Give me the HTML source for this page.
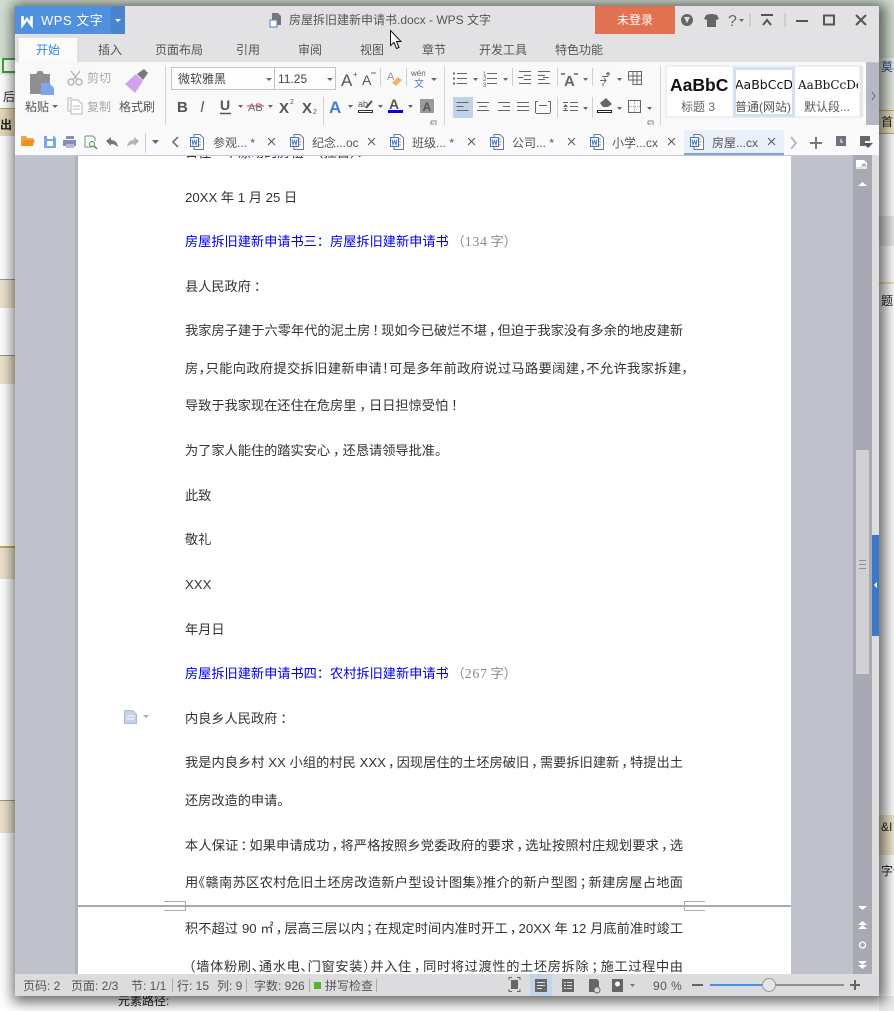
<!DOCTYPE html>
<html lang="zh"><head><meta charset="utf-8"><title>WPS 文字</title>
<style>
html,body{margin:0;padding:0;background:#fff}
body{width:894px;height:1011px;position:relative;overflow:hidden;font-family:"Liberation Sans","Noto Sans CJK SC",sans-serif}
.b{position:absolute;white-space:nowrap}
#win{position:absolute;left:15px;top:6px;width:864px;height:990px;background:#bfc1cb;box-shadow:2px 2px 13px 4px rgba(0,0,0,.6)}
#ov{position:absolute;left:0;top:0;width:894px;height:1011px}
#ov text{font-family:"Liberation Sans","Noto Sans CJK SC",sans-serif;font-size:12px;fill:#555}
#docclip{position:absolute;left:78px;top:155px;width:713px;height:819px;background:#fff;overflow:hidden}
#pshadow{position:absolute;left:75px;top:155px;width:3px;height:819px;background:#aeb0bb}
.l{position:absolute;left:107px;font-size:13.2px;line-height:20px;color:#333;white-space:nowrap;font-family:"Liberation Sans","Noto Sans CJK SC",sans-serif;font-feature-settings:"halt"}
.l u{text-decoration:none;padding:0 3px}
.j{width:498px;white-space:normal;text-align:justify;text-align-last:justify;height:20px;overflow:visible}
.j u{padding:0 2px}
.t u{padding:0}
.blue{color:#0000ee;font-feature-settings:normal}
.g{color:#888;font-size:13px;padding-left:3px;font-feature-settings:normal}
.g i{font-family:"Liberation Serif",serif;font-style:normal;font-size:14px;letter-spacing:.6px;padding:0 3px 0 0}
</style></head><body>

<!-- background behind the window -->
<div class="b" style="left:0;top:0;width:894px;height:58px;background:#d3ddd1"></div>
<div class="b" style="left:0;top:58px;width:15px;height:17px;background:#e8efe6"></div>
<div class="b" style="left:2px;top:58px;width:13px;height:15px;background:#3aa53a"></div>
<div class="b" style="left:4px;top:60px;width:11px;height:11px;background:#fff"></div>
<div class="b" style="left:0;top:108px;width:15px;height:27px;background:#e6d9b8;border-top:1px solid #c6a95f"></div>
<div class="b" style="left:0;top:279px;width:15px;height:28px;background:#ece3cc;border-top:1px solid #999"></div>
<div class="b" style="left:0;top:355px;width:15px;height:28px;background:#ece3cc;border-top:1px solid #999"></div>
<div class="b" style="left:0;top:546px;width:15px;height:31px;background:#ece3cc;border-top:2px solid #c6a95f"></div>
<div class="b" style="left:0;top:800px;width:15px;height:32px;background:#ece3cc;border-top:1px solid #999"></div>
<div class="b" style="left:879px;top:58px;width:15px;height:52px;background:#e4ece2"></div>
<div class="b" style="left:879px;top:110px;width:15px;height:22px;background:#efe7c8;border-top:1px solid #c6a95f;border-bottom:1px solid #c6a95f"></div>
<div class="b" style="left:879px;top:216px;width:15px;height:30px;background:#e8e8ea"></div>
<div class="b" style="left:879px;top:282px;width:15px;height:2px;background:#eedfa8"></div>
<div class="b" style="left:879px;top:815px;width:15px;height:40px;background:#f0e8cc"></div>
<div class="b" style="left:879px;top:996px;width:15px;height:15px;background:#eee"></div>
<div class="b" style="left:118px;top:992px;font-size:12px;color:#222">元素路径:</div>
<div class="b" style="left:881px;top:820px;font-size:12px;color:#222">&amp;I</div>
<div class="b" style="left:881px;top:862px;font-size:12px;color:#222">字体</div>
<div class="b" style="left:881px;top:113px;font-size:12px;color:#222">首</div>
<div class="b" style="left:881px;top:292px;font-size:12px;color:#222">题</div>
<div class="b" style="left:881px;top:58px;font-size:12px;color:#33528a">莫板</div>
<div class="b" style="left:3px;top:88px;font-size:12px;color:#333">后</div>
<div class="b" style="left:0;top:116px;font-size:12px;font-weight:bold;color:#222">出</div>

<div id="win"></div>
<div id="pshadow"></div>

<div id="docclip">
<div class="l" style="top:-12px">日往一个漂动的房租一（捏自）：</div>
<div class="l" style="top:33px">20XX 年 1 月 25 日</div>
<div class="l" style="top:77px"><span class="blue">房屋拆旧建新申请书三：房屋拆旧建新申请书</span><span class="g">（<i>134</i>字）</span></div>
<div class="l" style="top:122px">县人民政府<u>：</u></div>
<div class="l j" style="top:166px">我家房子建于六零年代的泥土房<u>！</u>现如今已破烂不堪<u>，</u>但迫于我家没有多余的地皮建新</div>
<div class="l j t" style="top:204px;width:503px">房，只能向政府提交拆旧建新申请！可是多年前政府说过马路要阔建，不允许我家拆建，</div>
<div class="l" style="top:241px">导致于我家现在还住在危房里<u>，</u>日日担惊受怕<u>！</u></div>
<div class="l" style="top:286px">为了家人能住的踏实安心<u>，</u>还恳请领导批准。</div>
<div class="l" style="top:331px">此致</div>
<div class="l" style="top:375px">敬礼</div>
<div class="l" style="top:420px">XXX</div>
<div class="l" style="top:465px">年月日</div>
<div class="l" style="top:509px"><span class="blue">房屋拆旧建新申请书四：农村拆旧建新申请书</span><span class="g">（<i>267</i>字）</span></div>
<div class="l" style="top:554px">内良乡人民政府<u>：</u></div>
<div class="l j" style="top:598px">我是内良乡村 XX 小组的村民 XXX<u>，</u>因现居住的土坯房破旧<u>，</u>需要拆旧建新<u>，</u>特提出土</div>
<div class="l" style="top:636px">还房改造的申请。</div>
<div class="l j" style="top:681px">本人保证<u>：</u>如果申请成功<u>，</u>将严格按照乡党委政府的要求<u>，</u>选址按照村庄规划要求<u>，</u>选</div>
<div class="l j" style="top:718px">用《赣南苏区农村危旧土坯房改造新户型设计图集》推介的新户型图<u>；</u>新建房屋占地面</div>
<div class="l j" style="top:764px">积不超过 90 ㎡<u>，</u>层高三层以内<u>；</u>在规定时间内准时开工<u>，</u>20XX 年 12 月底前准时竣工</div>
<div class="l j" style="top:802px;left:111px;width:494px">（墙体粉刷、通水电、门窗安装）并入住<u>，</u>同时将过渡性的土坯房拆除<u>；</u>施工过程中由</div>
<div class="b" style="left:0;top:750px;width:713px;height:2px;background:#a8a8b4"></div>
</div>

<svg id="ov" viewBox="0 0 894 1011" xmlns="http://www.w3.org/2000/svg">
<defs>
<symbol id="wd" viewBox="0 0 14 16" overflow="visible">
<path d="M4 .5h6l3.500 3.500v11.500H4z" fill="#fff" stroke="#777"/>
<path d="M6 5h5M8 8h3M8 11h3" stroke="#999"/>
<rect x="0.500" y="3.500" width="8" height="9" fill="#fff" stroke="#3f74c0"/>
<path d="M2 5.500l1 5 1.500-4 1.500 4 1-5" fill="none" stroke="#3f74c0"/>
</symbol>
</defs>

<!-- title bar -->
<rect x="15" y="6" width="864" height="56" fill="#e2e2e5"/>
<rect x="15" y="6" width="96" height="28" fill="#4f90df"/>
<rect x="111" y="6" width="14" height="28" fill="#4a84cc"/>
<path d="M22.500 16v9l4.500-6 4.500 6v-9" fill="none" stroke="#fff" stroke-width="2.600"/>
<text x="41" y="25" style="font-size:13px;fill:#fff;letter-spacing:.5px">WPS 文字</text>
<path d="M115 19h6l-3 3z" fill="#fff"/>
<path d="M272 13h6l3 3v9h-9z" fill="#777"/><rect x="270" y="20" width="7" height="7" fill="#fff" stroke="#4a84cc"/>
<text x="289" y="24" style="font-size:12px;fill:#555">房屋拆旧建新申请书.docx - WPS 文字</text>
<rect x="595" y="6" width="80" height="28" fill="#e07252"/>
<text x="617" y="24" style="fill:#fff">未登录</text>
<circle cx="687" cy="20" r="6" fill="#666"/><path d="M684 17l6 0-3 6z" fill="#e2e2e5"/>
<path d="M706 15l4-1h3l4 1 2 4-3 1v7h-9v-7l-3-1z" fill="#666"/>
<text x="728" y="26" style="font-size:16px;fill:#666">?</text><path d="M739 19h5l-2.500 3z" fill="#666"/>
<path d="M750 13v14M785 13v14" stroke="#bbb"/>
<path d="M761 15h12M763 25l4-5 4 5" fill="none" stroke="#555" stroke-width="2"/>
<path d="M796 21h12" stroke="#555" stroke-width="2"/>
<rect x="824" y="15.500" width="10" height="9" fill="none" stroke="#555" stroke-width="2"/>
<path d="M856 15l10 10M866 15l-10 10" stroke="#555" stroke-width="2"/>

<!-- menu tabs -->
<path d="M18 62V38q0-1 1-1h58q1 0 1 1v24z" fill="#fbfbfc" stroke="#d2d2d6"/>
<text x="36" y="54" style="fill:#3a86d0">开始</text>
<text x="98" y="54">插入</text><text x="155" y="54">页面布局</text><text x="236" y="54">引用</text>
<text x="298" y="54">审阅</text><text x="360" y="54">视图</text><text x="422" y="54">章节</text>
<text x="479" y="54">开发工具</text><text x="555" y="54">特色功能</text>

<!-- ribbon -->
<rect x="15" y="62" width="851" height="63" fill="#f9f9fa"/>
<rect x="19" y="61" width="58" height="2" fill="#f9f9fa"/>
<path d="M30 74h6l2-3h4l2 3h6v20H30z" fill="#8f8f8f"/>
<path d="M41 83h8l5 5v7H41z" fill="#7fa6ea"/>
<text x="25" y="111">粘贴</text><path d="M52 105h6l-3 3z" fill="#666"/>
<path d="M71 71l7 9M80 71l-7 9" stroke="#b9b9b9" stroke-width="1.500"/><circle cx="71" cy="82" r="3" fill="none" stroke="#b9b9b9" stroke-width="1.500"/><circle cx="79" cy="82" r="3" fill="none" stroke="#b9b9b9" stroke-width="1.500"/>
<text x="87" y="82" style="fill:#aaa">剪切</text>
<path d="M72 98h-4v13h4" fill="none" stroke="#b9b9b9"/><path d="M71 100h7l4 4v10H71z" fill="#fff" stroke="#b9b9b9"/><path d="M73 106h7M73 109h7" stroke="#b9b9b9"/>
<text x="87" y="111" style="fill:#aaa">复制</text>
<path d="M125 84l11-10 7 7-8 12z" fill="#cfa3ef"/><path d="M137 74l7-5 4 4-5 7z" fill="#777"/>
<text x="119" y="111">格式刷</text>
<path d="M165.500 66v59" stroke="#d4d4d8"/>

<rect x="171.500" y="67.500" width="164" height="22" fill="#fdfdfd" stroke="#c4c4c8"/><path d="M274.500 68v22" stroke="#c4c4c8"/>
<text x="178" y="83" style="fill:#444">微软雅黑</text><path d="M266 78h6l-3 3z" fill="#666"/>
<text x="278" y="83" style="fill:#444">11.25</text><path d="M327 78h6l-3 3z" fill="#666"/>
<text x="341" y="86" style="font-size:17px;fill:#555">A</text><text x="353" y="77" style="font-size:8px;fill:#555">+</text>
<text x="362" y="85" style="font-size:14px;fill:#555">A</text><path d="M371 73h5" stroke="#666"/>
<path d="M380.500 68v18M406.500 68v18" stroke="#d0d0d4"/>
<text x="387" y="80" style="font-size:11px;fill:#999">A</text><path d="M392 83l6-6 4 3-6 6z" fill="#f0b26a"/>
<text x="411" y="76" style="font-size:8px;fill:#666">wén</text><text x="414" y="87" style="font-size:10px;fill:#4a84cc">文</text><path d="M431 78h6l-3 3z" fill="#666"/>
<path d="M444.500 66v59" stroke="#d4d4d8"/>
<text x="177" y="112" style="font-size:15px;font-weight:bold;fill:#555">B</text>
<text x="200" y="112" style="font-size:16px;font-style:italic;fill:#666">I</text>
<text x="220" y="110" style="font-size:14px;font-weight:bold;fill:#555">U</text><path d="M220 113.500h11" stroke="#555" stroke-width="1.500"/>
<path d="M238 105h5l-2.500 3zM268 105h5l-2.500 3z" fill="#666"/>
<text x="248" y="111" style="font-size:11px;fill:#666">AB</text><path d="M247 106h17" stroke="#d44"/>
<text x="279" y="113" style="font-size:15px;font-weight:bold;fill:#555">X</text><text x="290" y="104" style="font-size:7px;fill:#555">2</text>
<text x="302" y="113" style="font-size:15px;font-weight:bold;fill:#555">X</text><text x="313" y="114" style="font-size:7px;fill:#555">2</text>
<path d="M323.500 97v28" stroke="#d0d0d4"/>
<text x="329" y="113" style="font-size:17px;font-weight:bold;fill:#3d7fd6">A</text><path d="M348 105h5l-2.500 3z" fill="#666"/>
<text x="358" y="107" style="font-size:9px;fill:#555">ab</text><path d="M366 108l6-7" stroke="#555" stroke-width="2"/><rect x="358.500" y="110.500" width="14" height="2" fill="#fff" stroke="#333"/><path d="M378 105h5l-2.500 3z" fill="#666"/>
<text x="389" y="109" style="font-size:14px;font-weight:bold;fill:#555">A</text><rect x="388" y="110" width="15" height="3" fill="#0000e6"/><path d="M408 105h5l-2.500 3z" fill="#666"/>
<rect x="420" y="99" width="14" height="14" fill="#9a9a9a"/><text x="422.500" y="111" style="font-size:12px;fill:#555;font-weight:bold">A</text>
<path d="M431 121h5v5M431 121v3h3" fill="none" stroke="#888"/>

<g stroke="#666" fill="none">
<path d="M457 73.500h10M457 78.500h10M457 83.500h10M487 73.500h10M487 78.500h10M487 83.500h10"/>
<path d="M453 73.500h2M453 78.500h2M453 83.500h2" stroke-width="2"/>
<path d="M519 71.500h12M524 75.500h7M524 79.500h7M519 83.500h12M518 77.500h5M538 71.500h12M538 75.500h7M538 79.500h7M538 83.500h12M543 77.500h6"/>
<path d="M602 76.500h6v-4M606 74.500l2-2 2 2M600 80.500h6M604 78l2 2.500-2 2.500M603 86v-3"/>
<path d="M628.500 71.500h13v13h-9M628.500 71.500v9M633 72v12M637 72v12M629 76h12M629 80h12"/>
<path d="M477 102.500h12M479 106.500h8M477 110.500h12M498 102.500h12M503 106.500h7M498 110.500h12M517 102.500h12M517 106.500h12M517 110.500h12M535.500 101v12M550.500 101v12M536 113.500h14M536 101.500h2M548 101.500h2M539 105.500h8M563 102.500h5M570 102.500h8M570 106.500h8M563 110.500h5M570 110.500h8"/>
</g>
<path d="M563 107l2.500-3 2.500 3zM564 108h3l-1.500 2z" fill="#666" stroke="none"/>
<text x="483" y="76" style="font-size:6px;fill:#666">1</text><text x="483" y="81" style="font-size:6px;fill:#666">2</text><text x="483" y="87" style="font-size:6px;fill:#666">3</text>
<rect x="453" y="97" width="20" height="21" fill="#c0d3e8"/>
<path d="M456.500 102.500h12M456.500 106.500h7M456.500 110.500h12" stroke="#666"/>
<path d="M473 78h5l-2.500 3zM503 78h5l-2.500 3zM583 78h5l-2.500 3zM617 78h5l-2.500 3zM583 107h5l-2.500 3zM617 107h5l-2.500 3zM647 107h5l-2.500 3z" fill="#666"/>
<path d="M512.500 68v18M557.500 68v18M592.500 68v18M557.500 97v21M592.500 97v21" stroke="#d0d0d4"/>
<text x="564" y="86" style="font-size:15px;font-weight:bold;fill:#666">A</text><path d="M561 74h4M574 74h4" stroke="#666" stroke-width="1.500"/>
<path d="M600 103l6-5 6 6-4 3h-5z" fill="#666"/><rect x="597.500" y="110.500" width="14" height="2" fill="#fff" stroke="#222"/>
<rect x="628.500" y="100.500" width="12" height="12" fill="none" stroke="#666"/><path d="M634.500 101v11M629 106.500h11" stroke="#aaa" stroke-dasharray="1 1"/>
<path d="M648 121h5v5M648 121v3h3" fill="none" stroke="#888"/>
<path d="M660.500 66v59" stroke="#d4d4d8"/>

<!-- styles gallery -->
<rect x="666" y="66" width="194" height="51" fill="#fff" stroke="#e2e2e5"/>
<rect x="733" y="67" width="62" height="50" fill="#d6e0f4"/><rect x="736" y="70" width="56" height="44" fill="#fff"/>
<rect x="860" y="66" width="3" height="51" fill="#e6e6e8"/>
<text x="670" y="91" style="font-size:17.500px;font-weight:bold;fill:#111">AaBbC</text>
<text x="681" y="111" style="fill:#666">标题 3</text>
<svg x="736" y="70" width="56" height="44" overflow="hidden"><text x="-1" y="19" style="font-family:'DejaVu Sans';font-size:12.500px;fill:#111">AaBbCcD</text><text x="-1" y="41" style="font-size:12px;fill:#555">普通(网站)</text></svg>
<svg x="798" y="70" width="60" height="44" overflow="hidden"><text x="0" y="19" style="font-size:12px;fill:#111;font-family:'DejaVu Serif'">AaBbCcDd</text></svg>
<text x="804" y="111" style="fill:#555">默认段...</text>
<rect x="866" y="63" width="13" height="65" fill="#b4b8c2"/><path d="M872 92l3 4-3 4" fill="none" stroke="#666"/>

<!-- doc tabs bar -->
<rect x="15" y="125" width="864" height="30" fill="#fafafc"/>
<rect x="15" y="155" width="864" height="1" fill="#c6c6d0"/>
<path d="M21 146v-10h5l1.500 2h6v8z" fill="#f5a24a"/><path d="M21 146l3-6h11l-3 6z" fill="#f88a1e"/>
<path d="M44 136h10l2 2v10H44z" fill="#7aa8e6"/><rect x="47" y="141" width="6" height="5" fill="#fff"/><rect x="47" y="136" width="6" height="3" fill="#fff"/>
<rect x="66" y="136" width="8" height="3" fill="#8a8cc0"/><rect x="63" y="140" width="13" height="6" fill="#8a8cc0"/><rect x="66" y="144" width="8" height="4" fill="#b6b8da"/>
<path d="M85 136h8l2 2v3M85 136v11h7" fill="none" stroke="#888"/><circle cx="92" cy="144" r="2.500" fill="none" stroke="#3a9a3a"/><path d="M94 146l3 3" stroke="#3a9a3a" stroke-width="1.500"/>
<path d="M106 141l5-4v3q6 0 7 7-3-3-7-3v2z" fill="#777"/>
<path d="M139 141l-5-4v3q-6 0-7 7 3-3 7-3v2z" fill="#b5b5b5"/>
<path d="M145.500 133v20" stroke="#d0d0d4"/>
<path d="M152 140h7l-3.500 4z" fill="#666"/>
<path d="M178 137l-5 5 5 5" fill="none" stroke="#666" stroke-width="1.500"/>
<use href="#wd" x="190" y="134" width="14" height="16"/><text x="213" y="147">参观... *</text><path d="M268 138l7 7M275 138l-7 7" stroke="#555"/>
<use href="#wd" x="290" y="134" width="14" height="16"/><text x="312" y="147">纪念...oc</text><path d="M368 138l7 7M375 138l-7 7" stroke="#555"/>
<use href="#wd" x="390" y="134" width="14" height="16"/><text x="412" y="147">班级... *</text><path d="M468 138l7 7M475 138l-7 7" stroke="#555"/>
<use href="#wd" x="490" y="134" width="14" height="16"/><text x="512" y="147">公司... *</text><path d="M568 138l7 7M575 138l-7 7" stroke="#555"/>
<use href="#wd" x="590" y="134" width="14" height="16"/><text x="612" y="147">小学...cx</text><path d="M668 138l7 7M675 138l-7 7" stroke="#555"/>
<rect x="684" y="130" width="100" height="25" fill="#e9f0fa"/><rect x="684" y="153" width="100" height="2" fill="#7fa5d8"/>
<use href="#wd" x="690" y="134" width="14" height="16"/><text x="712" y="147">房屋...cx</text><path d="M768 138l7 7M775 138l-7 7" stroke="#555"/>
<path d="M791 137l5 6-5 6" fill="none" stroke="#bbb" stroke-width="2"/>
<path d="M810 143h12M816 137v12" stroke="#777" stroke-width="2"/>
<rect x="836" y="136" width="10" height="10" fill="#70707e"/><path d="M841 139v3h2" stroke="#fff" fill="none"/>
<path d="M860 136h10v5h-5v5h-5z" fill="#666"/><path d="M863 143h10l-5 5z" fill="#555"/>

<!-- scrollbar -->
<rect x="853" y="155" width="19" height="819" fill="#a9a9b3"/>
<rect x="856" y="450" width="13" height="224" fill="#d1d1d5"/>
<path d="M859 560.500h7M859 564.500h7M859 568.500h7" stroke="#8e8e94"/>
<rect x="872" y="155" width="7" height="819" fill="#dedee1"/>
<rect x="872" y="535" width="7" height="101" fill="#3c78cc"/>
<path d="M874 585l3-3v6z" fill="#fff"/>
<path d="M856 160h8l3 3v3l-3-3-4 4h-4z" fill="#fff"/><rect x="856" y="166" width="11" height="3" fill="#fff" opacity=".7"/>
<path d="M858 186l4.500-4 4.500 4z" fill="#fff"/>
<path d="M858 906h9l-4.500 4z" fill="#fff"/>
<path d="M858 925l4.500-4 4.500 4zM858 929l4.500-4 4.500 4z" fill="#fff"/>
<circle cx="862.500" cy="945" r="3" fill="none" stroke="#fff" stroke-width="1.300"/>
<path d="M858 961l4.500 4 4.500-4zM858 965l4.500 4 4.500-4z" fill="#fff"/>

<!-- page break markers -->
<path d="M164 901.500h21.500v9H164M684.500 910.500v-9H705M684.500 910.500H705" fill="none" stroke="#aaa"/>
<rect x="164" y="905" width="22" height="2" fill="#a8a8b4"/><rect x="684" y="905" width="22" height="2" fill="#a8a8b4"/>

<!-- note icon -->
<path d="M124.500 710.500h8l4 4v9h-12z" fill="#c5d3e6" stroke="#a9bdd6"/><path d="M127 716h7M127 719h7" stroke="#fff"/>
<path d="M143 715h6l-3 3z" fill="#aaa"/>

<!-- status bar -->
<rect x="15" y="974" width="864" height="22" fill="#dcdcde"/>
<text x="23" y="990">页码: 2</text><text x="71" y="990">页面: 2/3</text><text x="131" y="990">节: 1/1</text>
<text x="177" y="990">行: 15</text><text x="217" y="990">列: 9</text><text x="254" y="990">字数: 926</text>
<text x="325" y="990">拼写检查</text><text x="653" y="990" style="letter-spacing:.5px">90 %</text>
<path d="M172.500 979v13M246.500 979v13M309.500 979v13M376.500 979v13" stroke="#aaa"/>
<rect x="314" y="982" width="7" height="7" fill="#58b030"/>
<rect x="530" y="974" width="22" height="22" fill="#c3d3e8"/>
<path d="M509 980v-2.500h3M517 977.500h3v2.500M520 989v2.500h-3M512 991.500h-3V989" fill="none" stroke="#666"/><rect x="511" y="980" width="7" height="9" fill="#666"/>
<rect x="535" y="979" width="12" height="13" fill="#666"/><path d="M537 982.500h8M537 985.500h8M537 988.500h5" stroke="#dde"/>
<rect x="562" y="979" width="12" height="13" fill="#666"/><path d="M564 982.500h2M564 985.500h2M564 988.500h2M567 982.500h5M567 985.500h5M567 988.500h5" stroke="#dcdcde"/>
<path d="M589 979h8l2 2v11h-10z" fill="#666"/><circle cx="597" cy="990" r="3" fill="#dcdcde" stroke="#666"/>
<rect x="612" y="979" width="11" height="13" fill="#666"/><circle cx="617.500" cy="984" r="2.500" fill="#fff"/>
<path d="M630 984h5l-2.500 3z" fill="#777"/>
<path d="M692 985h11" stroke="#666" stroke-width="2"/>
<rect x="710" y="984" width="134" height="2" fill="#8f8f8f"/><rect x="710" y="984" width="54" height="2" fill="#4a90e2"/>
<circle cx="769" cy="985" r="6.500" fill="#e4e4e4" stroke="#9a9a9a"/>
<path d="M850 985h10M855 980v10" stroke="#666" stroke-width="2"/>

<!-- mouse cursor -->
<path d="M390.500 30.500v15l3.500-3 2.500 6 2.500-1-2.500-6h4.500z" fill="#fff" stroke="#111"/>
</svg>
</body></html>
